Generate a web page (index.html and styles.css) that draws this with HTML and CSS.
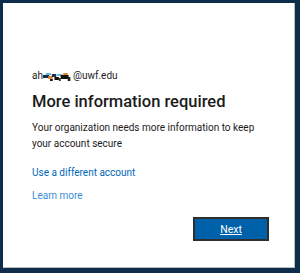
FILE: index.html
```html
<!DOCTYPE html>
<html>
<head>
<meta charset="utf-8">
<link rel="stylesheet" href="styles.css">
</head>
<body>
<div class="panel">
  <div class="email">ah<svg class="blob" width="30" height="9" viewBox="0 0 34 9" preserveAspectRatio="none"><rect x="0" y="3" width="7" height="3" fill="#1a2a4a"/><rect x="3" y="1" width="6" height="2" fill="#6fb7e0"/><rect x="6" y="4" width="5" height="3" fill="#e08a2a"/><rect x="10" y="2" width="5" height="3" fill="#203050"/><rect x="8" y="7" width="3" height="2" fill="#111"/><rect x="13" y="5" width="5" height="3" fill="#111"/><rect x="16" y="2" width="6" height="2" fill="#6fb7e0"/><rect x="20" y="3" width="9" height="4" fill="#111"/><rect x="23" y="1" width="5" height="2" fill="#e08a2a"/><rect x="28" y="5" width="3" height="4" fill="#222"/><rect x="18" y="6" width="2" height="3" fill="#222"/></svg>@uwf.edu</div>
  <h1 class="title">More information required</h1>
  <p class="desc">Your organization needs more information to keep your account secure</p>
  <a class="link" href="#">Use a different account</a>
  <a class="link light" href="#">Learn more</a>
  <div class="actions"><button class="next">Next</button></div>
</div>
</body>
</html>
```
FILE: styles.css
```css
html, body { margin: 0; padding: 0; }
body {
  background: #0d2d4b;
  width: 300px;
  height: 273px;
  overflow: hidden;
  font-family: Roboto, "Liberation Sans", sans-serif;
}
.panel {
  box-sizing: border-box;
  margin: 3px 0 0 3px;
  width: 292px;
  height: 265px;
  background: #fff;
  border-right: 1px solid #b9bec4;
  border-bottom: 1px solid #b9bec4;
  padding: 67px 0 0 29px;
  display: flex;
  flex-direction: column;
  align-items: flex-start;
}
.email {
  font-size: 10px;
  line-height: 12px;
  color: #1b1b1b;
  display: flex;
  align-items: center;
}
.blob { margin: 1px 0 0 0; }
.title {
  margin: 10px 0 0 0;
  font-size: 16.5px;
  line-height: 20px;
  font-weight: 500;
  color: #1b1b1b;
}
.desc {
  margin: 8px 0 0 0;
  width: 240px;
  font-size: 10px;
  line-height: 16px;
  color: #1b1b1b;
}
.link {
  margin-top: 14px;
  font-size: 10px;
  line-height: 14px;
  color: #0067b8;
  text-decoration: none;
}
.link.light { margin-top: 9px; color: #3a8fd4; }
.actions {
  align-self: stretch;
  display: flex;
  justify-content: flex-end;
  padding-right: 25px;
  margin-top: 14px;
}
.next {
  width: 76px;
  height: 24px;
  background: #0061ab;
  border: 2px solid #2e2e2e;
  color: #fff;
  font-family: inherit;
  font-size: 10.5px;
  text-decoration: underline;
  padding: 0;
}
```
